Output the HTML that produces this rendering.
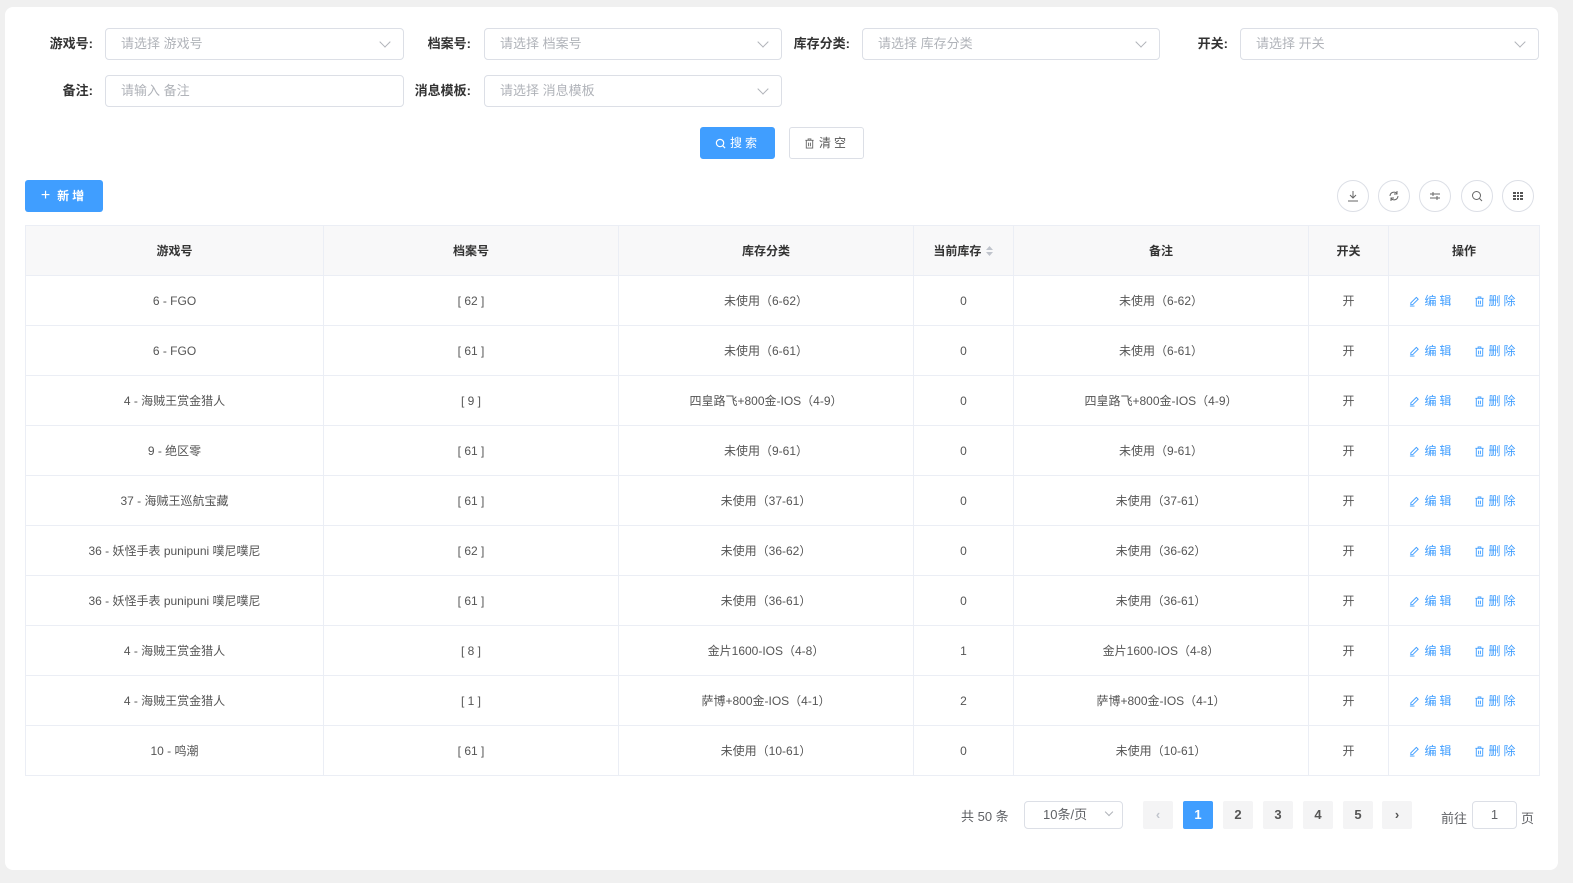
<!DOCTYPE html>
<html><head><meta charset="utf-8"><style>
*{box-sizing:border-box;margin:0;padding:0}
body{width:1573px;height:883px;background:#f0f0f0;font-family:"Liberation Sans","Noto Sans CJK SC",sans-serif;position:relative;overflow:hidden;color:#606266}
.card{position:absolute;left:5px;top:7px;width:1553px;height:863px;background:#fff;border-radius:8px}
.lbl{position:absolute;font-size:13px;font-weight:bold;color:#333;text-align:right;height:32px;line-height:32px}
.inp{position:absolute;height:32px;border:1px solid #dcdfe6;border-radius:4px;font-size:13px;color:#b0b3b9;line-height:30px;padding-left:15px}
.inp .ar{position:absolute;right:14px;top:9px;width:8px;height:8px;border-right:1px solid #b0b3b9;border-bottom:1px solid #b0b3b9;transform:rotate(45deg)}
.btn{position:absolute;height:32px;border-radius:3px;font-size:12px;line-height:30px;text-align:center;letter-spacing:3px;display:flex;align-items:center;justify-content:center;gap:4px}
.circ{position:absolute;top:180px;width:32px;height:32px;border:1px solid #dcdfe6;border-radius:50%;display:flex;align-items:center;justify-content:center}
table{position:absolute;left:25px;top:225px;border-collapse:collapse;width:1514px;table-layout:fixed;font-size:12px}
td,th{border:1px solid #ebeef5;text-align:center;height:50px;color:#555;font-weight:normal}
th{background:#f8f8f9;color:#333;font-weight:bold}
.op{color:#409eff;letter-spacing:3px}
.op svg{vertical-align:-2px;margin-right:4px}
.pg{position:absolute;top:801px;width:30px;height:28px;background:#f4f4f5;border-radius:2px;font-size:13px;font-weight:bold;text-align:center;line-height:28px;color:#555}
</style></head><body>
<svg width="0" height="0" style="position:absolute"><defs>
<symbol id="ed" viewBox="0 0 12 12"><path d="M8 1.5l2 2-6 6H2v-2zM1 11h5" fill="none" stroke="#409eff"/></symbol>
<symbol id="tr" viewBox="0 0 12 12"><path d="M1.5 2.5h9M4.5 2.5V1h3v1.5M2.5 2.5v8.5h7V2.5M5 5v4M7 5v4" fill="none" stroke="currentColor"/></symbol>
</defs></svg>
<div class="card"></div>
<div class="lbl" style="left:30px;top:28px;width:63px">游戏号:</div>
<div class="inp" style="left:105px;top:28px;width:299px">请选择 游戏号<span class="ar"></span></div>
<div class="lbl" style="left:408px;top:28px;width:63px">档案号:</div>
<div class="inp" style="left:484px;top:28px;width:298px">请选择 档案号<span class="ar"></span></div>
<div class="lbl" style="left:780px;top:28px;width:70px">库存分类:</div>
<div class="inp" style="left:862px;top:28px;width:298px">请选择 库存分类<span class="ar"></span></div>
<div class="lbl" style="left:1170px;top:28px;width:58px">开关:</div>
<div class="inp" style="left:1240px;top:28px;width:299px">请选择 开关<span class="ar"></span></div>
<div class="lbl" style="left:30px;top:75px;width:63px">备注:</div>
<div class="inp" style="left:105px;top:75px;width:299px">请输入 备注</div>
<div class="lbl" style="left:400px;top:75px;width:71px">消息模板:</div>
<div class="inp" style="left:484px;top:75px;width:298px">请选择 消息模板<span class="ar"></span></div>
<div class="btn" style="left:700px;top:127px;width:75px;background:#409eff;color:#fff;border:1px solid #409eff"><svg width="11" height="11" viewBox="0 0 12 12" fill="none" stroke="#fff" stroke-width="1.3"><circle cx="5.5" cy="5.5" r="4"/><path d="M8.5 8.5L11 11"/></svg>搜索</div>
<div class="btn" style="left:789px;top:127px;width:75px;border:1px solid #dcdfe6;color:#555"><svg width="11" height="11" style="color:#666"><use href="#tr"/></svg>清空</div>
<div class="btn" style="left:25px;top:180px;width:78px;background:#409eff;color:#fff;font-weight:bold"><span style="font-size:16px;font-weight:normal;letter-spacing:0;margin-right:3px">+</span>新增</div>
<div class="circ" style="left:1337px"><svg width="12" height="12" viewBox="0 0 12 12" fill="none" stroke="#666"><path d="M6 1v7M3 5l3 3 3-3M1 11h10"/></svg></div>
<div class="circ" style="left:1378px"><svg width="12" height="12" viewBox="0 0 12 12" fill="none" stroke="#666"><path d="M2 6a4 4 0 0 1 7-2.5M10 6a4 4 0 0 1-7 2.5M9 1v3H6M3 11V8h3"/></svg></div>
<div class="circ" style="left:1419px"><svg width="12" height="12" viewBox="0 0 12 12" fill="none" stroke="#666"><path d="M1 4h10M1 8h10M4 2v4M8 6v4"/></svg></div>
<div class="circ" style="left:1461px"><svg width="12" height="12" viewBox="0 0 12 12" fill="none" stroke="#666"><circle cx="5.5" cy="5.5" r="4"/><path d="M8.5 8.5L11 11"/></svg></div>
<div class="circ" style="left:1502px"><svg width="12" height="12" viewBox="0 0 12 12" fill="#555"><rect x="1" y="2" width="10" height="2"/><rect x="1" y="5" width="10" height="2"/><rect x="1" y="8" width="10" height="2"/><rect x="4" y="2" width="1" height="8" fill="#fff"/><rect x="7" y="2" width="1" height="8" fill="#fff"/></svg></div>
<table>
<colgroup><col style="width:298px"><col style="width:295px"><col style="width:295px"><col style="width:100px"><col style="width:295px"><col style="width:80px"><col style="width:151px"></colgroup>
<tr><th>游戏号</th><th>档案号</th><th>库存分类</th><th>当前库存 <svg width="9" height="12" viewBox="0 0 9 12" style="vertical-align:-2px"><path d="M4.5 1L8 5H1zM4.5 11L8 7H1z" fill="#c0c4cc"/></svg></th><th>备注</th><th>开关</th><th>操作</th></tr>
<tr><td>6 - FGO</td><td>[ 62 ]</td><td>未使用（6-62）</td><td>0</td><td>未使用（6-62）</td><td>开</td><td class="op"><svg width="11" height="11"><use href="#ed"/></svg>编辑 &nbsp; <svg width="11" height="11"><use href="#tr"/></svg>删除</td></tr>
<tr><td>6 - FGO</td><td>[ 61 ]</td><td>未使用（6-61）</td><td>0</td><td>未使用（6-61）</td><td>开</td><td class="op"><svg width="11" height="11"><use href="#ed"/></svg>编辑 &nbsp; <svg width="11" height="11"><use href="#tr"/></svg>删除</td></tr>
<tr><td>4 - 海贼王赏金猎人</td><td>[ 9 ]</td><td>四皇路飞+800金-IOS（4-9）</td><td>0</td><td>四皇路飞+800金-IOS（4-9）</td><td>开</td><td class="op"><svg width="11" height="11"><use href="#ed"/></svg>编辑 &nbsp; <svg width="11" height="11"><use href="#tr"/></svg>删除</td></tr>
<tr><td>9 - 绝区零</td><td>[ 61 ]</td><td>未使用（9-61）</td><td>0</td><td>未使用（9-61）</td><td>开</td><td class="op"><svg width="11" height="11"><use href="#ed"/></svg>编辑 &nbsp; <svg width="11" height="11"><use href="#tr"/></svg>删除</td></tr>
<tr><td>37 - 海贼王巡航宝藏</td><td>[ 61 ]</td><td>未使用（37-61）</td><td>0</td><td>未使用（37-61）</td><td>开</td><td class="op"><svg width="11" height="11"><use href="#ed"/></svg>编辑 &nbsp; <svg width="11" height="11"><use href="#tr"/></svg>删除</td></tr>
<tr><td>36 - 妖怪手表 punipuni 噗尼噗尼</td><td>[ 62 ]</td><td>未使用（36-62）</td><td>0</td><td>未使用（36-62）</td><td>开</td><td class="op"><svg width="11" height="11"><use href="#ed"/></svg>编辑 &nbsp; <svg width="11" height="11"><use href="#tr"/></svg>删除</td></tr>
<tr><td>36 - 妖怪手表 punipuni 噗尼噗尼</td><td>[ 61 ]</td><td>未使用（36-61）</td><td>0</td><td>未使用（36-61）</td><td>开</td><td class="op"><svg width="11" height="11"><use href="#ed"/></svg>编辑 &nbsp; <svg width="11" height="11"><use href="#tr"/></svg>删除</td></tr>
<tr><td>4 - 海贼王赏金猎人</td><td>[ 8 ]</td><td>金片1600-IOS（4-8）</td><td>1</td><td>金片1600-IOS（4-8）</td><td>开</td><td class="op"><svg width="11" height="11"><use href="#ed"/></svg>编辑 &nbsp; <svg width="11" height="11"><use href="#tr"/></svg>删除</td></tr>
<tr><td>4 - 海贼王赏金猎人</td><td>[ 1 ]</td><td>萨博+800金-IOS（4-1）</td><td>2</td><td>萨博+800金-IOS（4-1）</td><td>开</td><td class="op"><svg width="11" height="11"><use href="#ed"/></svg>编辑 &nbsp; <svg width="11" height="11"><use href="#tr"/></svg>删除</td></tr>
<tr><td>10 - 鸣潮</td><td>[ 61 ]</td><td>未使用（10-61）</td><td>0</td><td>未使用（10-61）</td><td>开</td><td class="op"><svg width="11" height="11"><use href="#ed"/></svg>编辑 &nbsp; <svg width="11" height="11"><use href="#tr"/></svg>删除</td></tr>
</table>
<div style="position:absolute;left:961px;top:806px;font-size:13px">共 50 条</div>
<div class="inp" style="left:1024px;top:801px;width:99px;height:28px;line-height:26px;color:#606266;padding-left:18px">10条/页<span class="ar" style="top:7px;width:6px;height:6px;right:10px"></span></div>
<div class="pg" style="left:1143px;color:#c0c4cc">‹</div>
<div class="pg" style="left:1183px;background:#409eff;color:#fff">1</div>
<div class="pg" style="left:1223px">2</div>
<div class="pg" style="left:1263px">3</div>
<div class="pg" style="left:1303px">4</div>
<div class="pg" style="left:1343px">5</div>
<div class="pg" style="left:1382px">›</div>
<div style="position:absolute;left:1441px;top:808px;font-size:13px">前往</div>
<div class="inp" style="left:1472px;top:801px;width:45px;height:28px;line-height:26px;color:#606266;padding:0;text-align:center">1</div>
<div style="position:absolute;left:1521px;top:808px;font-size:13px">页</div>
</body></html>
